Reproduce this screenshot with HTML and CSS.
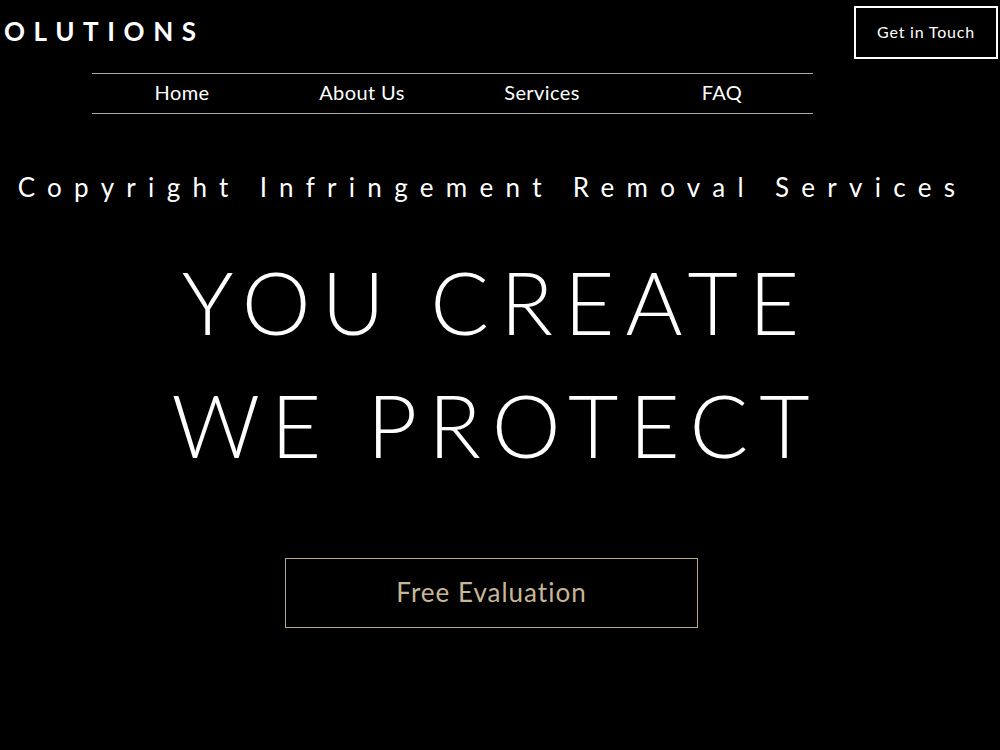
FILE: index.html
```html
<!DOCTYPE html>
<html>
<head>
  <title>Solutions | Copyright Infringement Removal</title>
  <link rel="stylesheet" href="styles.css">
</head>
<body>
  <header class="topbar">
    <div class="logo">OLUTIONS</div>
    <a href="#contact" class="btn-touch">Get in Touch</a>
  </header>

  <nav class="mainnav">
    <a href="#">Home</a>
    <a href="#about">About Us</a>
    <a href="#services">Services</a>
    <a href="#faq">FAQ</a>
  </nav>

  <section class="hero">
    <p class="tagline">Copyright Infringement Removal Services</p>
    <h1 class="headline">YOU CREATE<br>WE PROTECT</h1>
    <a href="#evaluation" class="btn-eval">Free Evaluation</a>
  </section>
</body>
</html>
```

FILE: styles.css
```css
/* Reset */
*,
*::before,
*::after {
  box-sizing: border-box;
  margin: 0;
  padding: 0;
}

body {
  font-family: Lato, "Noto Sans", sans-serif;
  background-color: #000;
  color: #fff;
  height: 750px;
  overflow: hidden;
}

a {
  color: inherit;
  text-decoration: none;
}

/* Header */
.topbar {
  display: flex;
  justify-content: space-between;
  align-items: flex-start;
  padding: 6px 2px 0 4px;
}

.logo {
  font-size: 26px;
  font-weight: 700;
  letter-spacing: 8.6px;
  line-height: 50px;
}

.btn-touch {
  display: flex;
  align-items: center;
  justify-content: center;
  width: 144px;
  height: 53px;
  padding-bottom: 2px;
  border: 2px solid #fff;
  font-size: 16px;
  letter-spacing: 0.8px;
}

/* Navigation */
.mainnav {
  display: grid;
  grid-template-columns: repeat(4, 180px);
  width: 721px;
  margin: 14px 0 0 92px;
  border-top: 1px solid #aaa;
  border-bottom: 1px solid #aaa;
  height: 41px;
}

.mainnav a {
  text-align: center;
  font-size: 20px;
  letter-spacing: 0.4px;
  line-height: 37px;
}

/* Hero */
.hero {
  display: flex;
  flex-direction: column;
  align-items: center;
  padding-right: 17px;
}

.tagline {
  margin-top: 56px;
  padding-left: 2px;
  font-size: 26px;
  letter-spacing: 12.3px;
  line-height: 34px;
}

.headline {
  margin-top: 36px;
  padding-left: 9px;
  font-size: 87px;
  font-weight: 300;
  line-height: 123px;
  letter-spacing: 11px;
  text-align: center;
}

.btn-eval {
  display: flex;
  align-items: center;
  justify-content: center;
  margin-top: 72px;
  width: 413px;
  height: 70px;
  padding-bottom: 2px;
  border: 1px solid #b9a98c;
  color: #c7b797;
  font-size: 26px;
  letter-spacing: 1px;
}
```
